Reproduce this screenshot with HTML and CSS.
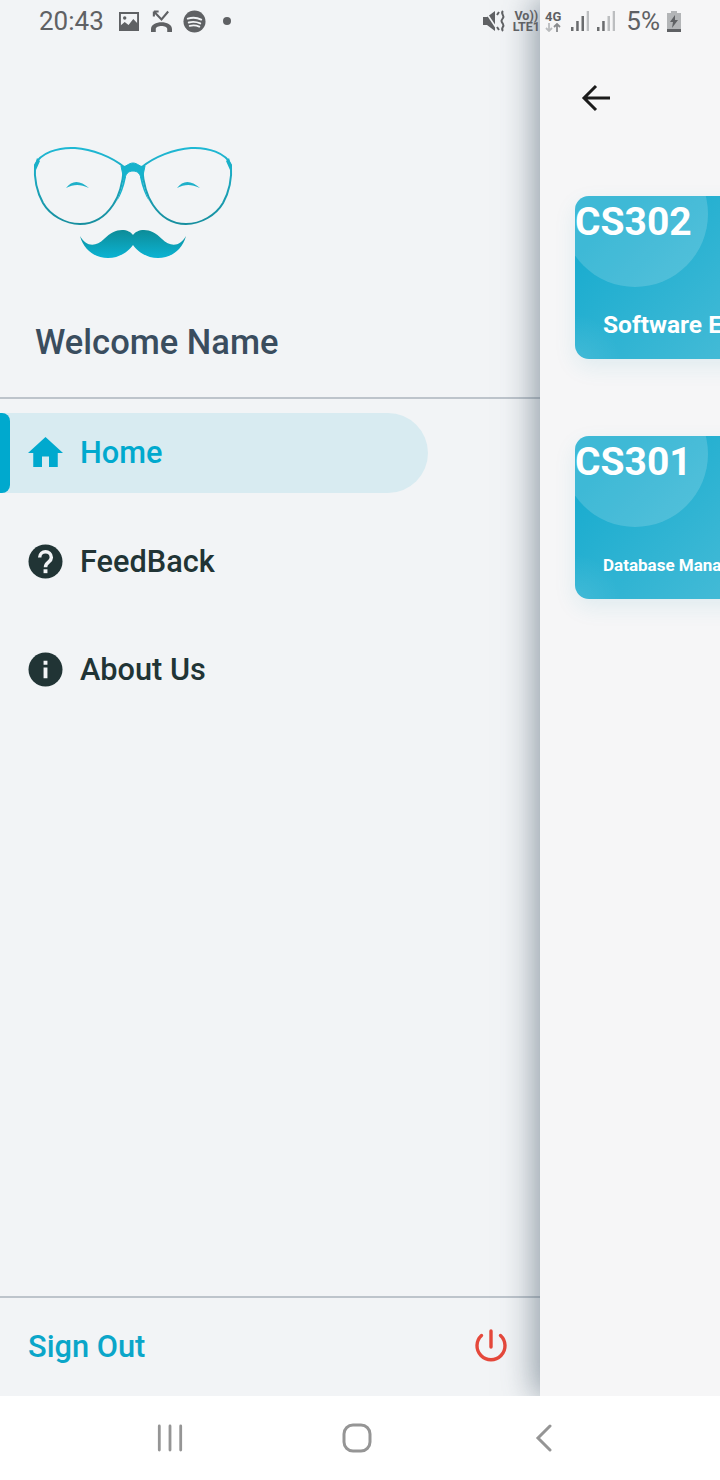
FILE: index.html
```html
<!DOCTYPE html>
<html lang="en">
<head>
    <meta charset="UTF-8">
    <meta name="viewport" content="width=device-width, initial-scale=1.0">
    <title>Courses</title>
    <link rel="stylesheet" href="styles.css">
</head>
<body>

    <div class="screen">
        <div class="status-bar">
            <div class="status-left">
                <span class="status-time">20:43</span>
                <svg width="20" height="19" viewBox="0 0 21 19" preserveAspectRatio="none"><rect x="1" y="1" width="19" height="17" fill="none" stroke="#5f6164" stroke-width="2"/><path fill="#5f6164" d="M1 18v-4l5-4 4 3 5-6 5 5v6z"/><circle cx="6" cy="6" r="1.800" fill="#5f6164"/></svg>
                <svg width="21" height="22" viewBox="0 0 22 22" preserveAspectRatio="none"><path fill="none" stroke="#5f6164" stroke-width="2.200" d="M3 1.500l8 8 7-8M3 1.500v5M3 1.500h5"/><path fill="#5f6164" d="M0 19c0-9 22-9 22 0v3h-5v-3c0-4-12-4-12 0v3H0z"/></svg>
                <svg class="status-spotify" width="23" height="23" viewBox="0 0 24 24"><circle cx="12" cy="12" r="11.500" fill="#5f6164"/><path fill="none" stroke="#f2f4f6" stroke-width="2" stroke-linecap="round" d="M5 9c5-1.500 10-1 14 1M6 13c4-1 8-.8 12 1M7 16.500c3-.7 7-.5 10 .8"/></svg>
                <span class="status-dot"></span>
            </div>
            <div class="status-right">
                <svg width="23" height="22" viewBox="0 0 23 22"><path fill="#5f6164" d="M0 7h4l8-6v20l-8-6H0z"/><path fill="none" stroke="#f2f4f6" stroke-width="1.600" d="M2 1l12 18"/><path fill="none" stroke="#5f6164" stroke-width="2" d="M14 5l2-3M14 17l2 3M20 1c-3 3 2 4 0 7s-2 3 0 6-3 4 0 7"/></svg>
                <div class="net-text"><span>Vo))</span><span>LTE1</span></div>
                <div class="net-gen">
                    <span>4G</span>
                    <svg width="16" height="9" viewBox="0 0 16 9"><path fill="none" stroke="#b9bbbd" stroke-width="1.800" d="M4 0v8M1 5l3 3 3-3"/><path fill="none" stroke="#8a8c8e" stroke-width="1.800" d="M12 9V1M9 4l3-3 3 3"/></svg>
                </div>
                <div class="signal">
                    <svg width="18" height="20" viewBox="0 0 18 20"><path fill="#6a6c6e" d="M0 16h2.500v4H0zM5.200 10h2.500v10H5.200zM10.500 5h2.500v15h-2.500z"/><path fill="#bcbec0" d="M15.700 0h2.400v20h-2.400z"/></svg>
                    <svg width="18" height="20" viewBox="0 0 18 20"><path fill="#6a6c6e" d="M0 16h2.500v4H0zM5.200 10h2.500v10H5.200z"/><path fill="#bcbec0" d="M10.500 5h2.500v15h-2.500zM15.700 0h2.400v20h-2.400z"/></svg>
                </div>
                <span class="status-pct">5%</span>
                <svg width="14" height="21" viewBox="0 0 14 21"><path fill="#b3b5b7" d="M4 0h6v2h4v19H0V2h4z"/><path fill="#5f6164" d="M0 18h14v3H0zM8 4L3 11h3l-1 6 6-8H8z"/></svg>
            </div>
        </div>

        <div class="main">
            <aside class="drawer">
                <div class="drawer-head">
                    <svg class="logo" width="230" height="135" viewBox="0 0 230 135">
                        <defs>
                            <linearGradient id="frame" x1="0" y1="0" x2="0" y2="1">
                                <stop offset="0" stop-color="#1fb8d4"/>
                                <stop offset="1" stop-color="#178f9f"/>
                            </linearGradient>
                            <linearGradient id="stache" x1="0" y1="0" x2="0" y2="1">
                                <stop offset="0" stop-color="#0d8c98"/>
                                <stop offset="1" stop-color="#0bb3d3"/>
                            </linearGradient>
                        </defs>
                        <path fill="none" stroke="url(#frame)" stroke-width="2" d="M15 30C20 18 38 12 55 13C72 14 92 22 104 32C103 45 100 60 93 70C85 82 75 89 60 89C45 89 30 80 23 68C17 57 14 44 15 30Z"/>
                        <path fill="none" stroke="url(#frame)" stroke-width="2" d="M211 30C206 18 188 12 171 13C154 14 134 22 122 32C123 45 126 60 133 70C141 82 151 89 166 89C181 89 196 80 203 68C209 57 212 44 211 30Z"/>
                        <path fill="#16b2cc" stroke="#16b2cc" d="M101 31C106 33 108 28 113 28C118 28 120 33 125 31L122 45C120 39 118 36 113 36C108 36 106 39 104 45Z"/>
                        <path fill="#16b2cc" d="M104 40L106 42C104 52 101 60 97 66C100 58 103 50 104 40ZM122 40L120 42C122 52 125 60 129 66C126 58 123 50 122 40Z"/>
                        <path fill="#1ab0c8" d="M14 33L17 23L20 26L16 35ZM212 33L209 23L206 26L210 35Z"/>
                        <path fill="#1fb0c9" d="M46 53C52 45 60 45 69 53C60 49 54 49 46 53ZM157 53C163 45 171 45 180 53C171 49 165 49 157 53Z"/>
                        <path fill="url(#stache)" d="M60 101C66 112 76 112 84 104C90 98 96 95 102 95C107 95 111 97 113 100C115 97 119 95 124 95C130 95 136 98 142 104C150 112 160 112 166 101C162 116 150 123 138 123C126 123 117 116 113 110C109 116 100 123 88 123C76 123 64 116 60 101Z"/>
                    </svg>
                    <h1 class="welcome">Welcome Name</h1>
                </div>

                <nav class="menu">
                    <a class="menu-item active">
                        <svg width="35" height="30" viewBox="2 3 20 17" preserveAspectRatio="none"><path fill="#00a9ce" d="M10 20v-6h4v6h5v-8h3L12 3 2 12h3v8z"/></svg>
                        <span>Home</span>
                    </a>
                    <a class="menu-item">
                        <svg width="35" height="35" viewBox="0 0 36 36"><circle cx="18" cy="18" r="17.500" fill="#213435"/><path fill="none" stroke="#f2f4f6" stroke-width="3.600" d="M12 14c0-8 12-8 12 0 0 5-6 4.500-6 10"/><rect x="16" y="26" width="4" height="4" fill="#f2f4f6"/></svg>
                        <span>FeedBack</span>
                    </a>
                    <a class="menu-item">
                        <svg width="35" height="35" viewBox="0 0 36 36"><circle cx="18" cy="18" r="17.500" fill="#213435"/><path fill="#f2f4f6" d="M16 16h4v11h-4zM16 9h4v4h-4z"/></svg>
                        <span>About Us</span>
                    </a>
                </nav>

                <div class="drawer-foot">
                    <span class="sign-out">Sign Out</span>
                    <svg width="34" height="34" viewBox="0 0 34 34"><path fill="none" stroke="#e5483b" stroke-width="3.400" stroke-linecap="round" d="M17 2v16M7.500 6.500a14 14 0 1 0 19 0"/></svg>
                </div>
            </aside>

            <section class="content">
                <svg class="back" width="30" height="28" viewBox="0 0 30 28"><path fill="none" stroke="#1b1b1b" stroke-width="3" d="M29 14H4M15 2L3 14l12 12"/></svg>

                <div class="card">
                    <div class="card-code">CS302</div>
                    <div class="card-title">Software Engineering</div>
                </div>
                <div class="card">
                    <div class="card-code">CS301</div>
                    <div class="card-title small">Database Management System</div>
                </div>
            </section>
        </div>

        <div class="nav-bar">
            <div class="nav-btn">
                <svg width="28" height="28" viewBox="0 0 28 28"><path fill="none" stroke="#959595" stroke-width="2.800" stroke-linecap="round" d="M3.300 2v24M14 2v24M24.700 2v24"/></svg>
            </div>
            <div class="nav-btn">
                <svg width="30" height="30" viewBox="0 0 30 30"><rect x="2" y="2" width="26" height="26" rx="9" fill="none" stroke="#959595" stroke-width="3"/></svg>
            </div>
            <div class="nav-btn">
                <svg width="20" height="28" viewBox="0 0 20 28"><path fill="none" stroke="#959595" stroke-width="3" stroke-linecap="round" d="M16 2L4 14l12 12"/></svg>
            </div>
        </div>
    </div>

</body>
</html>
```

FILE: styles.css
```css
* {
    box-sizing: border-box;
}

body {
    margin: 0;
    font-family: Roboto, 'Liberation Sans', sans-serif;
    background-color: #fff;
}

.screen {
    position: relative;
    width: 720px;
    height: 1480px;
    display: flex;
    flex-direction: column;
    overflow: hidden;
}

/* status bar sits over both the drawer and the page behind */
.status-bar {
    position: absolute;
    top: 0;
    left: 0;
    right: 0;
    height: 42px;
    padding: 0 39px 0 39px;
    display: flex;
    justify-content: space-between;
    align-items: center;
    color: #5f6164;
    z-index: 5;
}

.status-left {
    display: flex;
    align-items: center;
    gap: 12px;
}

.status-time {
    font-size: 26px;
    margin-right: 3px;
}

.status-spotify {
    margin-left: -1px;
}

.status-dot {
    width: 8px;
    height: 8px;
    margin-left: 5px;
    border-radius: 50%;
    background-color: #5f6164;
}

.status-right {
    display: flex;
    align-items: center;
    gap: 7px;
}

.net-text {
    display: flex;
    flex-direction: column;
    align-items: center;
    margin-right: -2px;
    font-size: 12.500px;
    font-weight: 700;
    line-height: 11px;
}

.net-gen {
    display: flex;
    flex-direction: column;
    align-items: center;
    font-size: 13px;
    font-weight: 700;
    line-height: 12px;
}

.signal {
    display: flex;
    gap: 8px;
    margin-left: 3px;
}

.status-pct {
    font-size: 26px;
    margin-left: 4px;
}

.main {
    height: 1396px;
    display: flex;
}

.drawer {
    width: 540px;
    display: flex;
    flex-direction: column;
    background-color: #f2f4f6;
}

.drawer-head {
    height: 399px;
    padding: 135px 0 0 20px;
    border-bottom: 2px solid #bdc4cb;
}

.logo {
    display: block;
}

.welcome {
    margin: 50px 0 0 15px;
    font-size: 34.500px;
    font-weight: 500;
    line-height: 44px;
    color: #3a4d5e;
}

.menu {
    flex: 1;
    padding-top: 14px;
}

.menu-item {
    display: flex;
    align-items: center;
    gap: 17px;
    width: 428px;
    height: 80px;
    margin-bottom: 28px;
    padding-left: 28px;
    padding-bottom: 2px;
    font-size: 30.700px;
    font-weight: 500;
    color: #213435;
}

.menu-item.active {
    position: relative;
    margin-bottom: 29px;
    color: #00a9ce;
    background-color: #d8ebf1;
    border-radius: 0 40px 40px 0;
}

.menu-item.active::before {
    content: "";
    position: absolute;
    left: 0;
    top: 0;
    bottom: 0;
    width: 10px;
    background-color: #00a9ce;
    border-radius: 0 8px 8px 0;
}

.drawer-foot {
    height: 100px;
    padding: 0 32px 2px 28px;
    border-top: 2px solid #bdc4cb;
    display: flex;
    justify-content: space-between;
    align-items: center;
}

.sign-out {
    font-size: 30.800px;
    font-weight: 500;
    color: #0ba6c9;
}

.content {
    position: relative;
    flex: 1;
    padding: 84px 0 0 35px;
    background-color: #f6f6f7;
    box-shadow: -6px 0 30px rgba(70, 90, 105, 0.55);
    overflow: hidden;
}

.back {
    display: block;
    margin: 0 0 84px 6px;
}

.card {
    position: relative;
    width: 340px;
    height: 163px;
    margin-bottom: 77px;
    border-radius: 14px;
    background:
        radial-gradient(circle at 0 100%, rgba(255, 255, 255, 0.1), rgba(255, 255, 255, 0) 45px),
        linear-gradient(135deg, #1aaccf 12%, #42bad6 60%);
    box-shadow: 0 8px 22px rgba(30, 150, 180, 0.1);
    overflow: hidden;
    color: #fff;
}

.card::before {
    content: "";
    position: absolute;
    left: -13px;
    top: -55px;
    width: 146px;
    height: 146px;
    border-radius: 50%;
    background-color: rgba(255, 255, 255, 0.16);
}

.card-code {
    position: relative;
    height: 52px;
    font-size: 39px;
    font-weight: 700;
    line-height: 52px;
}

.card-title {
    position: relative;
    height: 40px;
    margin-top: 57px;
    padding-left: 28px;
    font-size: 24.500px;
    font-weight: 700;
    line-height: 40px;
    white-space: nowrap;
}

.card-title.small {
    font-size: 17px;
}

.nav-bar {
    position: relative;
    height: 84px;
    padding-right: 7px;
    display: flex;
    justify-content: center;
    background-color: #fff;
}

.nav-btn {
    width: 187px;
    display: flex;
    justify-content: center;
    align-items: center;
}
```
